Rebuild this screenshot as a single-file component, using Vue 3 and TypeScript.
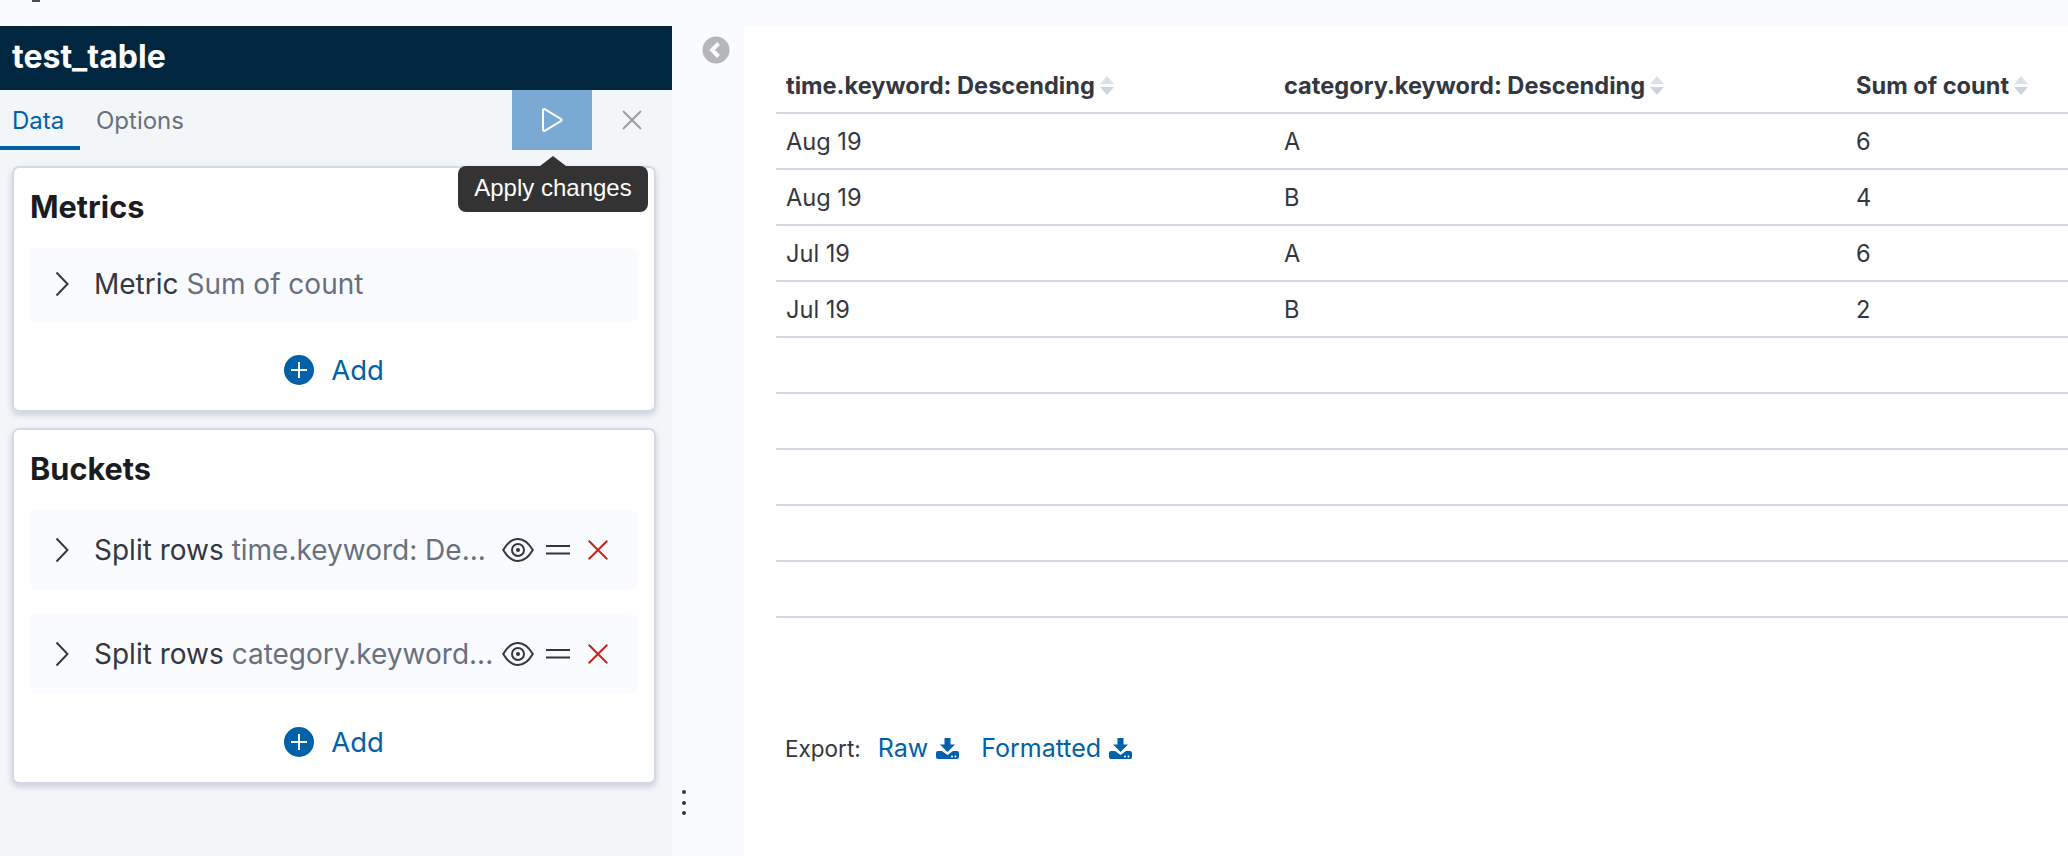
<script setup lang="ts">
interface Bucket { label: string; value: string }
const buckets: Bucket[] = [
  { label: 'Split rows', value: 'time.keyword: De...' },
  { label: 'Split rows', value: 'category.keyword...' },
]
const columns: string[] = ['time.keyword: Descending', 'category.keyword: Descending', 'Sum of count']
const rows: string[][] = [
  ['Aug 19', 'A', '6'],
  ['Aug 19', 'B', '4'],
  ['Jul 19', 'A', '6'],
  ['Jul 19', 'B', '2'],
  ['', '', ''],
  ['', '', ''],
  ['', '', ''],
  ['', '', ''],
  ['', '', ''],
]
const exportsList: string[] = ['Raw', 'Formatted']
</script>

<template>
  <div class="page">
    <span class="fragment"></span>
    <aside class="side">
      <header class="title">test_table</header>
      <div class="tabs">
        <span class="tab active">Data</span>
        <span class="tab">Options</span>
        <button class="apply" type="button">
          <svg width="22" height="26" viewBox="0 0 22 26" fill="none"><path d="M2 3.2c0-1 .9-1.5 1.7-1L20 12a1.2 1.2 0 0 1 0 2L3.700 23.800c-.8.5-1.700 0-1.700-1z" stroke="#fff" stroke-width="2"/></svg>
          <span class="tooltip">Apply changes</span>
        </button>
        <button class="discard" type="button">
          <svg width="20" height="20" viewBox="0 0 20 20" fill="none"><path d="M1 1l18 18M19 1L1 19" stroke="#9a9ca1" stroke-width="2"/></svg>
        </button>
      </div>

      <section class="card metrics">
        <h2>Metrics</h2>
        <div class="agg short">
          <svg class="chev" width="14" height="26" viewBox="0 0 14 26" fill="none"><path d="M1.500 1.500L12.500 13 1.500 24.500" stroke="#343741" stroke-width="2"/></svg>
          <span class="agg-text">Metric <em>Sum of count</em></span>
        </div>
        <div class="add">
          <svg width="30" height="30" viewBox="0 0 30 30"><circle cx="15" cy="15" r="15" fill="#0061a9"/><path d="M15 7v16M7 15h16" stroke="#fff" stroke-width="2"/></svg>
          <span>Add</span>
        </div>
      </section>

      <section class="card buckets">
        <h2>Buckets</h2>
        <div class="agg-list">
          <div v-for="b in buckets" :key="b.value" class="agg">
            <svg class="chev" width="14" height="26" viewBox="0 0 14 26" fill="none"><path d="M1.500 1.500L12.500 13 1.500 24.500" stroke="#343741" stroke-width="2"/></svg>
            <span class="agg-text">{{ b.label }} <em>{{ b.value }}</em></span>
            <svg class="eye" width="32" height="24" viewBox="0 0 32 24" fill="none"><path d="M1.200 12C5 5.500 10 1 16 1s11 4.500 14.800 11C27 18.500 22 23 16 23S5 18.500 1.200 12z" stroke="#343741" stroke-width="2"/><circle cx="16" cy="12" r="6" stroke="#343741" stroke-width="2"/><circle cx="16" cy="12" r="2" fill="#343741"/></svg>
            <svg class="grip" width="24" height="10" viewBox="0 0 24 10" fill="none"><path d="M0 1h24M0 8.500h24" stroke="#343741" stroke-width="2"/></svg>
            <svg class="del" width="20" height="20" viewBox="0 0 20 20" fill="none"><path d="M.7.700l18.600 18.600M19.300.700L.7 19.300" stroke="#bd271e" stroke-width="2"/></svg>
          </div>
        </div>
        <div class="add">
          <svg width="30" height="30" viewBox="0 0 30 30"><circle cx="15" cy="15" r="15" fill="#0061a9"/><path d="M15 7v16M7 15h16" stroke="#fff" stroke-width="2"/></svg>
          <span>Add</span>
        </div>
      </section>
      <span class="resizer"><i></i><i></i><i></i></span>
    </aside>

    <div class="gutter">
      <svg width="28" height="28" viewBox="0 0 28 28"><circle cx="14" cy="14" r="13.500" fill="#b5b6b9"/><path d="M16.500 7.500L10 14l6.500 6.500" fill="none" stroke="#fff" stroke-width="4"/></svg>
    </div>

    <main class="content">
      <table>
        <colgroup>
          <col class="c1" /><col class="c2" /><col />
        </colgroup>
        <thead>
          <tr>
            <th v-for="c in columns" :key="c">
              <span class="th-in">{{ c }}
                <svg width="14" height="19" viewBox="0 0 14 19"><path d="M7 0l7 8H0z" fill="#dbe1ea"/><path d="M7 19l7-8H0z" fill="#ccd4e2"/></svg>
              </span>
            </th>
          </tr>
        </thead>
        <tbody>
          <tr v-for="(r, i) in rows" :key="i">
            <td v-for="(v, j) in r" :key="j">{{ v }}</td>
          </tr>
        </tbody>
      </table>
      <div class="export">
        <span class="export-label">Export:</span>
        <a v-for="e in exportsList" :key="e" class="dl">{{ e }}
          <svg width="23" height="21" viewBox="0 0 23 21"><path d="M8.500 0h6v6.500H19L11.500 14 4 6.500h4.500z" fill="#0061a9"/><path d="M0 15a2 2 0 0 1 2-2h4l5.500 4 5.500-4h4a2 2 0 0 1 2 2v4a2 2 0 0 1-2 2H2a2 2 0 0 1-2-2z" fill="#0061a9"/><circle cx="16" cy="18.500" r="1" fill="#fff"/><circle cx="19.500" cy="18.500" r="1" fill="#fff"/></svg>
        </a>
      </div>
    </main>
  </div>
</template>

<style>
html, body { margin: 0; background: #fafbff; }
</style>

<style scoped>
.page {
  position: relative;
  display: grid;
  grid-template-columns: 672px 72px 1fr;
  width: 2068px;
  height: 856px;
  box-sizing: border-box;
  padding-top: 26px;
  overflow: hidden;
  background: #fafbff;
  font-family: Inter, "Liberation Sans", sans-serif;
  font-size: 24px;
  color: #343741;
}
.fragment {
  position: absolute;
  left: 32px;
  top: 0;
  width: 8px;
  height: 2px;
  background: #4a4c55;
}
.side {
  position: relative;
  background: #f3f6f9;
  display: flex;
  flex-direction: column;
}
.title {
  height: 64px;
  box-sizing: border-box;
  padding-left: 12px;
  background: #012740;
  color: #fff;
  font-size: 32px;
  font-weight: 700;
  line-height: 62px;
}
.tabs {
  display: flex;
  height: 60px;
  margin-bottom: 16px;
}
.tab {
  box-sizing: border-box;
  padding: 13px 0 0 16px;
  height: 60px;
  color: #69707d;
  line-height: 36px;
  border-bottom: 4px solid transparent;
}
.tab.active {
  width: 80px;
  padding-left: 12px;
  color: #0061a9;
  border-bottom-color: #0061a9;
}
.apply, .discard {
  width: 80px;
  height: 60px;
  border: 0;
  padding: 0;
  display: flex;
  align-items: center;
  justify-content: center;
  background: transparent;
}
.apply {
  position: relative;
  margin-left: auto;
  background: #7aaad3;
}
.tooltip {
  position: absolute;
  left: -54px;
  top: 76px;
  width: 190px;
  height: 46px;
  border-radius: 8px;
  background: #333;
  color: #fff;
  font-family: "Liberation Sans", sans-serif;
  font-size: 24px;
  line-height: 44px;
  text-align: center;
  z-index: 2;
}
.tooltip::before {
  content: "";
  position: absolute;
  left: 82px;
  top: -10px;
  border-left: 13px solid transparent;
  border-right: 13px solid transparent;
  border-bottom: 10px solid #333;
}
.card {
  margin-left: 12px;
  width: 644px;
  box-sizing: border-box;
  border: 2px solid #d3dae6;
  border-radius: 7px;
  background: #fff;
  padding: 0 16px;
  box-shadow: 0 3px 6px rgba(152, 162, 179, 0.45);
}
.metrics { height: 246px; margin-bottom: 16px; }
.buckets { height: 356px; }
h2 {
  margin: 0;
  height: 80px;
  box-sizing: border-box;
  padding: 19px 0 0;
  font-size: 30.7px;
  line-height: 40px;
  font-weight: 700;
  color: #1a1c21;
}
.agg {
  display: flex;
  align-items: center;
  height: 80px;
  padding: 0 30px 0 25px;
  border-radius: 8px;
  background: #fafbff;
  font-size: 28px;
}
.agg.short { height: 74px; padding-bottom: 2px; box-sizing: border-box; }
.agg-list { display: flex; flex-direction: column; gap: 24px; }
.chev { flex: none; margin-right: 25px; }
.agg-text {
  flex: 1;
  min-width: 0;
  white-space: nowrap;
}
em { font-style: normal; color: #69707d; }
.eye { flex: none; margin-left: 8px; margin-right: 12px; }
.grip { flex: none; margin-right: 18px; }
.del { flex: none; }
.add {
  display: flex;
  align-items: center;
  justify-content: center;
  gap: 17px;
  height: 86px;
  box-sizing: border-box;
  padding: 10px 0 0;
  color: #0061a9;
  font-size: 27.5px;
}
.resizer {
  position: absolute;
  left: 682px;
  top: 764px;
  display: flex;
  flex-direction: column;
  gap: 6.500px;
}
.resizer i {
  width: 4px;
  height: 4px;
  border-radius: 50%;
  background: #343741;
}
.gutter { padding: 10px 0 0 30px; }
.gutter svg { display: block; }
.content {
  background: #fff;
  padding: 31px 0 0 32px;
  overflow: hidden;
}
table {
  width: 1292px;
  table-layout: fixed;
  border-collapse: collapse;
  font-size: 23.6px;
}
.c1 { width: 498px; }
.c2 { width: 572px; }
th, td {
  height: 56px;
  box-sizing: border-box;
  padding: 0 10px;
  text-align: left;
  border-bottom: 2px solid #d3dae6;
}
th { font-weight: 700; padding-top: 2px; }
.th-in { display: inline-flex; align-items: center; gap: 5px; white-space: nowrap; }
.export {
  display: flex;
  align-items: center;
  margin-top: 115px;
  padding-left: 9px;
}
.export-label { margin-right: 17px; font-size: 22.500px; }
.dl {
  display: inline-flex;
  align-items: center;
  gap: 8px;
  margin-right: 22px;
  color: #0061a9;
  font-size: 25px;
}
</style>
